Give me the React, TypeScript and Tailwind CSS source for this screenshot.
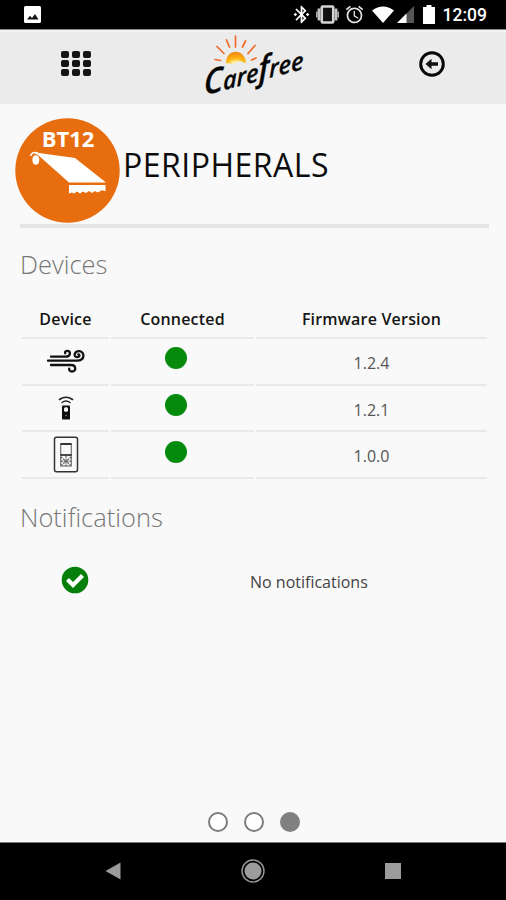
import type { ReactNode } from "react";
import { MdAccessAlarm, MdBluetoothConnected } from "react-icons/md";

type Device = {
  name: string;
  icon: ReactNode;
  firmware: string;
};

const devices: Device[] = [
  { name: "Wind sensor", icon: <WindIcon />, firmware: "1.2.4" },
  { name: "Remote", icon: <RemoteIcon />, firmware: "1.2.1" },
  { name: "Wall switch", icon: <SwitchIcon />, firmware: "1.0.0" },
];

function WindIcon() {
  return (
    <svg className="h-[26px] w-[40px]" fill="none" stroke="#111" strokeLinecap="round" viewBox="0 0 40 26">
      <path d="M5 8.700H19.500C25 8.700 25 2.800 21.500 2.800C19.600 2.800 18.700 4 19.200 5.300" strokeWidth="2.300" />
      <path d="M2 12.700H31C39.500 12.700 39 3.200 33 3.200C28 3.200 27.200 9 31 9.200C33.800 9.300 34.200 6.500 32.300 6.300" strokeWidth="2.300" />
      <path d="M5 17H25C30.500 17 30.500 23.500 26 23.500C23.800 23.500 22.800 22 23.200 20.700" strokeWidth="2.300" />
    </svg>
  );
}

function RemoteIcon() {
  return (
    <svg className="h-[26px] w-[18px]" viewBox="0 0 18 26">
      <g fill="none" stroke="#222" strokeLinecap="round">
        <path d="M2.500 4.500Q9 0 15.500 4.500" strokeWidth="1.600" />
        <path d="M5 7.500Q9 4.500 13 7.500" strokeWidth="1.400" />
      </g>
      <rect fill="#111" height="14" rx="0.800" width="8" x="5" y="10.500" />
      <rect fill="#f9f9f9" height="4.500" rx="1.500" width="4" x="7" y="12.200" />
      <circle cx="9" cy="20.500" fill="#888" r="0.800" />
    </svg>
  );
}

function SwitchIcon() {
  return (
    <svg className="h-[37px] w-[26px]" fill="none" viewBox="0 0 26 37">
      <rect height="34.500" rx="2" stroke="#333" strokeWidth="1.500" width="23" x="1.500" y="1.250" />
      <rect height="22" stroke="#555" strokeWidth="1" width="10.500" x="7.750" y="8" />
      <path d="M7.500 8H18.500M7.500 19H18.500" stroke="#111" strokeWidth="1.500" />
      <path d="M8 21L18 29.500M18 21L8 29.500M8 25.200H18M13 20V30" stroke="#666" strokeDasharray="1.800 1" strokeWidth="1.400" />
    </svg>
  );
}

function StatusBar() {
  return (
    <div className="flex h-[30px] shrink-0 items-center border-b border-[#8a8a8a] bg-black pr-[19px] pl-[24px] text-white">
      <svg className="size-[17px]" viewBox="0 0 17 17">
        <rect fill="#fff" height="17" rx="1.500" width="17" />
        <path d="M3 13.500L6 9.800L8 12L11 8L14.500 13.500Z" fill="#111" />
      </svg>
      <div className="ml-auto flex items-center">
        <MdBluetoothConnected className="size-[21px]" />
        <svg className="ml-[4px] h-[19px] w-[23px]" viewBox="0 0 23 19">
          <path d="M0.800 6.500V12.500M22.200 6.500V12.500" stroke="#aaa" strokeWidth="1.600" />
          <path d="M3 3.500V15.500M20 3.500V15.500" stroke="#c4c4c4" strokeWidth="2.800" />
          <rect fill="#111" height="16" rx="1" stroke="#d4d4d4" strokeWidth="2.600" width="11.500" x="5.750" y="1.500" />
        </svg>
        <MdAccessAlarm className="ml-[5px] size-[21px] text-[#e4e4e4]" />
        <svg className="ml-[7px] h-[17px] w-[22px]" viewBox="0 0 22 17">
          <path d="M0 4.500Q11-3.500 22 4.500L11 17Z" fill="#fff" />
        </svg>
        <svg className="ml-[3px] h-[17px] w-[17px]" viewBox="0 0 17 17">
          <path d="M17 0V17H0Z" fill="#555" />
          <path d="M9.500 7.500V17H0Z" fill="#fff" />
        </svg>
        <svg className="ml-[9px] h-[19px] w-[12px]" viewBox="0 0 12 19">
          <path d="M3.500 0H8.500V2H12V19H0V2H3.500Z" fill="#fff" />
        </svg>
        <span className="mt-[2px] ml-[8px] font-[Roboto] text-[17.500px] leading-none font-medium">12:09</span>
      </div>
    </div>
  );
}

function Logo() {
  return (
    <svg aria-label="Carefree" className="h-[74px] w-[120px] overflow-visible" role="img" viewBox="0 0 120 74">
      <defs>
        <radialGradient cx="50%" cy="100%" id="sun" r="90%">
          <stop offset="0.200" stopColor="#fff0a0" />
          <stop offset="0.500" stopColor="#fdb913" />
          <stop offset="1" stopColor="#f28a16" />
        </radialGradient>
      </defs>
      <path d="M31 33C31 18 50 18 51 33L44 31L38 34Z" fill="url(#sun)" />
      <g fill="none" stroke="#f26a2a" strokeLinecap="round" strokeWidth="1.700">
        <path d="M20 29.500L25.500 30.500M22 16.500L29 23.500M31.500 10L34.500 17M40.500 6V17M50.500 11L47.500 17M60 15.500L53 23.500M61 28L56.500 30" />
      </g>
      <text
        fill="#050505"
        fontFamily="'Open Sans', sans-serif"
        fontSize="24"
        fontStyle="italic"
        fontWeight="600"
        lengthAdjust="spacingAndGlyphs"
        stroke="#050505"
        strokeWidth="0.300"
        textLength="103"
        transform="translate(9 65.500) rotate(-15) skewX(-14)"
      >
        <tspan fontSize="33">C</tspan>are<tspan fontSize="32">f</tspan>ree
      </text>
    </svg>
  );
}

function Header() {
  return (
    <header className="flex h-[74px] shrink-0 items-center justify-between border-t-2 border-[#f4f4f4] bg-[#ecebeb] pr-[61px] pl-[61px]">
      <button aria-label="Menu" className="mb-[9px] grid grid-cols-3 gap-x-[3px] gap-y-[2px]">
        {Array.from({ length: 9 }, (_, index) => (
          <span className="h-[7px] w-[8px] rounded-[2px] bg-[#151515]" key={index} />
        ))}
      </button>
      <div className="-mt-[2px] mr-[1px]">
        <Logo />
      </div>
      <button aria-label="Back" className="mb-[8px]">
        <svg className="size-[26px]" fill="none" viewBox="0 0 26 26">
          <circle cx="13" cy="13" r="11.300" stroke="#080808" strokeWidth="3" />
          <path d="M6.500 13L12.500 7.800V11.300H19V14.700H12.500V18.200Z" fill="#111" />
        </svg>
      </button>
    </header>
  );
}

function AwningBadge() {
  return (
    <svg aria-label="BT12" className="size-[105px] shrink-0" role="img" viewBox="0 0 105 105">
      <circle cx="52.500" cy="52.500" fill="#e86d0f" r="52.200" />
      <text
        fill="#fff"
        fontFamily="'Open Sans', sans-serif"
        fontSize="22"
        fontWeight="700"
        textAnchor="middle"
        x="53"
        y="28.500"
      >
        BT12
      </text>
      <path d="M17 34L60 40L91 64.500H54L23 37Z" fill="#fff" />
      <path d="M15.500 38Q17 33 23 35" fill="none" stroke="#fff" strokeWidth="1.500" />
      <ellipse cx="20.800" cy="42" fill="#fff" rx="3.500" ry="4.800" />
      <path d="M54 67H90.500V73.500L88.500 72.500L86 72.500L83 74.500L80 73L77 75L74 73L71 75L68 73.500L65 75.500L62 73.500L59 75.500L57 74.500L54 75.500Z" fill="#fff" />
    </svg>
  );
}

function DeviceTable() {
  return (
    <table className="mt-[16px] w-[469px] table-fixed border-separate border-spacing-x-[2px] border-spacing-y-0 text-center text-[16px]">
      <thead>
        <tr className="h-[41px] text-[16px] text-[#151515] [&>th]:border-b-2 [&>th]:border-[#e9e9e9] [&>th]:p-0 [&>th]:pt-[2px] [&>th]:font-semibold [&>th]:tracking-[0.200px]">
          <th className="w-[87px]">Device</th>
          <th className="w-[143px]">Connected</th>
          <th>Firmware Version</th>
        </tr>
      </thead>
      <tbody>
        {devices.map((device) => (
          <tr className="h-[46.700px] [&>td]:border-b-2 [&>td]:border-[#e9e9e9] [&>td]:p-0" key={device.name}>
            <td>
              <div aria-label={device.name} className="flex justify-center pl-[1px]">
                {device.icon}
              </div>
            </td>
            <td>
              <div className="mx-auto mb-[6px] size-[22px] -translate-x-[7px] rounded-full bg-[#058a0b]" />
            </td>
            <td>
              <span className="block pt-[3px] text-[#555]">{device.firmware}</span>
            </td>
          </tr>
        ))}
      </tbody>
    </table>
  );
}

function NavigationBar() {
  return (
    <nav className="flex h-[58px] shrink-0 items-center justify-between border-t border-[#777] bg-black pr-[105px] pb-[2px] pl-[105px]">
      <svg aria-label="Back" className="h-[18px] w-[16px]" viewBox="0 0 16 18">
        <path d="M0.500 9L15.500 0.500V17.500Z" fill="#9b9b9b" />
      </svg>
      <svg aria-label="Home" className="size-[24px]" viewBox="0 0 24 24">
        <circle cx="12" cy="12" fill="none" r="11" stroke="#999" strokeWidth="1.400" />
        <circle cx="12" cy="12" fill="#9b9b9b" r="8.500" />
      </svg>
      <span className="size-[16px] bg-[#9b9b9b]" />
    </nav>
  );
}

export default function App() {
  return (
    <div className="flex h-[900px] w-[506px] flex-col overflow-hidden bg-[#f9f9f9] font-['Open_Sans',sans-serif]">
      <StatusBar />
      <Header />
      <main className="flex flex-1 flex-col px-[20px]">
        <div className="-ml-[5px] flex h-[120px] items-start pt-[14px]">
          <AwningBadge />
          <h1 className="mt-[25px] ml-[3px] text-[32px] leading-[44px] font-medium tracking-[0.500px] text-[#0c0c0c]">
            PERIPHERALS
          </h1>
        </div>
        <hr className="-mr-[3px] h-[4px] border-0 bg-[#e5e5e5]" />
        <h2 className="mt-[18px] text-[25.500px] leading-[36px] font-light text-[#777]">Devices</h2>
        <DeviceTable />
        <h2 className="mt-[20px] text-[25.500px] leading-[36px] font-light text-[#777]">Notifications</h2>
        <div className="mt-[31px] flex items-center">
          <svg className="ml-[41px] size-[28px]" viewBox="0 0 28 28">
            <circle cx="14" cy="14" fill="#07800b" r="13.300" />
            <path d="M6.500 13.500L12 19L21.500 9.500" fill="none" stroke="#fff" strokeWidth="4.200" />
          </svg>
          <p className="mt-[4px] ml-[161px] text-[16px] text-[#444]">No notifications</p>
        </div>
        <div className="mt-auto mb-[10px] flex justify-center gap-[16px] pl-[2px]">
          <span className="size-[20px] rounded-full border-2 border-[#7c7c7c] bg-white" />
          <span className="size-[20px] rounded-full border-2 border-[#7c7c7c] bg-white" />
          <span className="size-[20px] rounded-full bg-[#808080]" />
        </div>
      </main>
      <NavigationBar />
    </div>
  );
}
